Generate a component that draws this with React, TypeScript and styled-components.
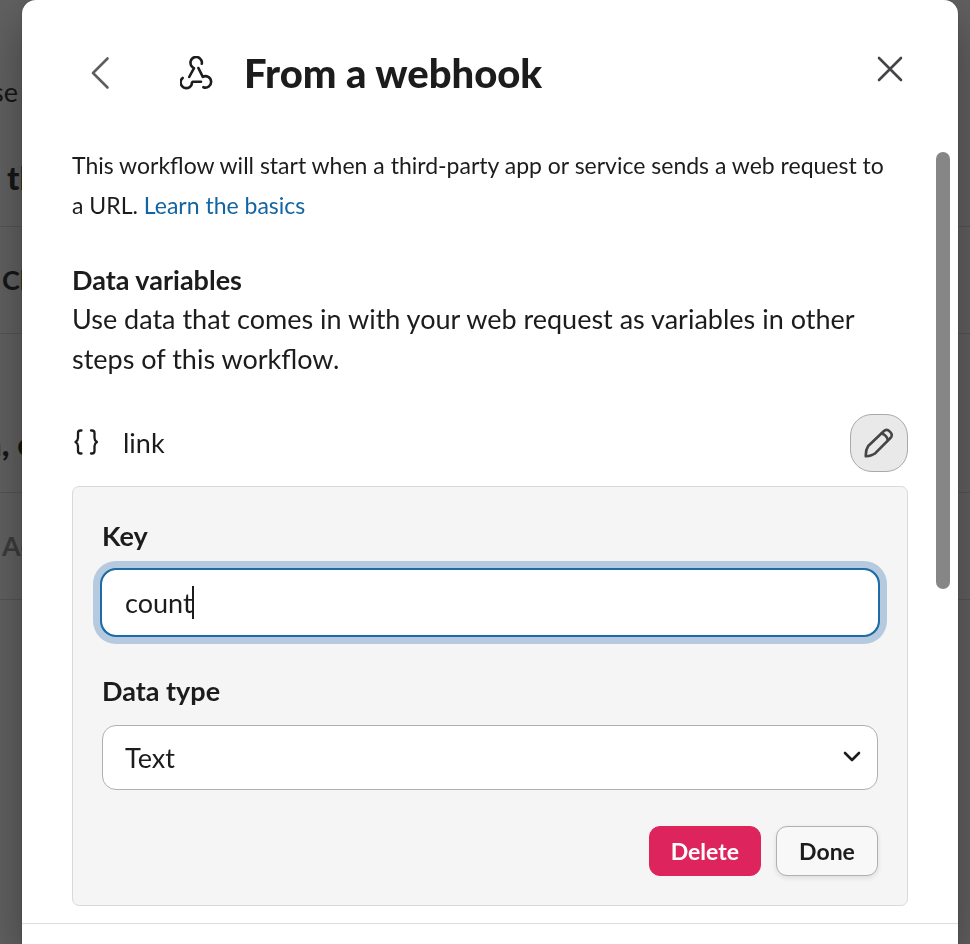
import React, { useState } from "react";
import styled, { createGlobalStyle, css } from "styled-components";

const GlobalStyle = createGlobalStyle`
  *, *::before, *::after { box-sizing: border-box; }
  html, body, #root { height: 100%; }
  body {
    margin: 0;
    overflow: hidden;
    background: #616161;
    color: #1d1c1d;
    font-family: Lato, "Open Sans", sans-serif;
    font-size: 27px;
    line-height: 40px;
  }
  button, input, select { font: inherit; color: inherit; margin: 0; }
`;

const Workspace = styled.div`
  min-height: 100%;
  color: #161616;
`;

const StepRow = styled.div<{ $height: number }>`
  display: flex;
  flex-direction: column;
  justify-content: center;
  height: ${(p) => p.$height}px;
  border-bottom: 1px solid #555555;
`;

const StepText = styled.span<{
  $indent?: number;
  $fromEnd?: number;
  $weight?: number;
  $size?: number;
  $muted?: boolean;
}>`
  display: flex;
  white-space: nowrap;
  font-weight: ${(p) => p.$weight ?? 400};
  font-size: ${(p) => p.$size ?? 27}px;
  ${(p) =>
    p.$fromEnd !== undefined
      ? css`
          width: ${p.$fromEnd}px;
          justify-content: flex-end;
        `
      : css`
          padding-left: ${p.$indent ?? 0}px;
        `}
  ${(p) => p.$muted && "color: #3c3c3c;"}
`;

const IntroRow = styled(StepRow)`
  justify-content: flex-end;
  gap: 45px;
  padding-bottom: 29px;
`;

const Overlay = styled.div`
  position: fixed;
  inset: 0;
  display: flex;
  padding: 0 12px 0 22px;
`;

const Dialog = styled.section`
  flex: 1;
  min-width: 0;
  display: flex;
  flex-direction: column;
  background: #ffffff;
  border-radius: 14px 14px 0 0;
  box-shadow: 0 0 0 1px rgba(29, 28, 29, 0.13), 0 18px 48px rgba(0, 0, 0, 0.35);
`;

const Header = styled.header`
  display: flex;
  align-items: center;
  flex-shrink: 0;
  height: 145px;
  padding: 0 50px;
`;

const IconButton = styled.button`
  display: flex;
  align-items: center;
  justify-content: center;
  width: 56px;
  height: 56px;
  padding: 0;
  border: 0;
  background: none;
  color: #5e5d60;
`;

const CloseButton = styled(IconButton)`
  width: 36px;
  margin: 0 0 8px auto;
  color: #454447;
`;

const TitleIcon = styled.span`
  display: flex;
  margin: 0 30px 0 52px;
`;

const Title = styled.h1`
  margin: 0;
  font-size: 40px;
  font-weight: 900;
  line-height: 48px;
`;

const Body = styled.div`
  flex: 1;
  min-height: 0;
  display: flex;
  padding-right: 8px;
`;

const Content = styled.div`
  flex: 1;
  min-width: 0;
  overflow: hidden;
  padding: 0 28px 17px 50px;
`;

const ScrollTrack = styled.div`
  display: grid;
  grid-template-rows: 17fr 13fr;
  width: 14px;
  padding-top: 7px;
`;

const ScrollThumb = styled.div`
  border-radius: 7px;
  background: #868686;
`;

const Intro = styled.p`
  margin: 0 0 35px;
  font-size: 23px;
`;

const Link = styled.a`
  color: #1264a3;
  text-decoration: none;
`;

const SectionTitle = styled.h2`
  margin: 0;
  font-size: inherit;
  font-weight: 700;
  line-height: 39px;
`;

const Description = styled.p`
  margin: 0 0 35px;
`;

const VariableRow = styled.div`
  display: flex;
  align-items: center;
  height: 58px;
  margin-bottom: 14px;
`;

const VariableName = styled.span`
  flex: 1;
  margin-left: 23px;
`;

const EditButton = styled(IconButton)`
  width: 58px;
  height: 58px;
  border: 1px solid #a9a9a9;
  border-radius: 22px;
  background: #e9e9e9;
  color: #454447;
`;

const Panel = styled.form`
  display: flex;
  flex-direction: column;
  gap: 36px;
  padding: 29px;
  border: 1px solid #d9d9d9;
  border-radius: 7px;
  background: #f5f5f5;
`;

const Field = styled.div`
  display: flex;
  flex-direction: column;
  gap: 14px;
`;

const Label = styled.label`
  font-weight: 700;
`;

const Control = styled.div`
  position: relative;
  display: flex;
`;

const controlBox = css`
  width: 100%;
  height: 65px;
  padding: 0 22px;
  border-radius: 14px;
  background: #ffffff;
  outline: none;
`;

const TextInput = styled.input`
  ${controlBox}
  border: 1px solid #ffffff;
  box-shadow: 0 0 0 2px #1d6ba7, 0 0 0 9px #b5cade;
  caret-color: transparent;
`;

const Caret = styled.span`
  position: absolute;
  left: 90px;
  top: 16px;
  width: 2px;
  height: 33px;
  background: #1d1c1d;
`;

const Select = styled.select`
  ${controlBox}
  appearance: none;
  border: 1px solid #b0b0b0;
`;

const SelectArrow = styled.svg`
  position: absolute;
  right: 16px;
  top: 26px;
  pointer-events: none;
`;

const Actions = styled.div`
  display: flex;
  justify-content: flex-end;
  gap: 15px;
`;

const Button = styled.button<{ $danger?: boolean }>`
  min-width: 102px;
  height: 50px;
  padding: 0 21px;
  border: 1px solid ${(p) => (p.$danger ? "#de245c" : "#b0b0b0")};
  border-radius: 11px;
  background: ${(p) => (p.$danger ? "#de245c" : "#f8f8f8")};
  color: ${(p) => (p.$danger ? "#ffffff" : "#1d1c1d")};
  font-size: 23px;
  font-weight: 700;
  line-height: 40px;
  ${(p) => !p.$danger && "box-shadow: 0 2px 5px rgba(0, 0, 0, 0.1);"}
`;

const Footer = styled.footer`
  flex-shrink: 0;
  height: 21px;
  border-top: 1px solid #dddddd;
`;

const stroke = {
  fill: "none",
  stroke: "currentColor",
  strokeLinecap: "round",
  strokeLinejoin: "round",
} as const;

const BackIcon = () => (
  <svg width="20" height="34" viewBox="0 0 20 34" {...stroke} strokeWidth="2.6" aria-hidden="true">
    <path d="M17.500 2.500 3 17l14.500 14.500" />
  </svg>
);

const CloseIcon = () => (
  <svg width="26" height="26" viewBox="0 0 26 26" {...stroke} strokeWidth="2.6" aria-hidden="true">
    <path d="M2 2l22 22M24 2 2 24" />
  </svg>
);

const WebhookIcon = () => (
  <svg width="34" height="34" viewBox="0 0 34 34" {...stroke} strokeWidth="2.6" aria-hidden="true">
    <path d="M21.800 7.800A5.700 5.700 0 1 0 12.400 11L14 12.200 9.200 21" />
    <path d="M18.400 12l4.400 8.800A5.700 5.700 0 1 1 23.400 31.200" />
    <path d="M2.700 22A5.700 5.700 0 1 0 12 26.500L12.800 25.800H21" />
  </svg>
);

const BracesIcon = () => (
  <svg width="28" height="28" viewBox="0 0 28 28" {...stroke} strokeWidth="2.3" aria-hidden="true">
    <path d="M9.500 1.500H8.500C6.600 1.500 6 2.600 6 4v5c0 2-1.200 3.200-2.500 4C4.800 13.800 6 15 6 17v5c0 1.400.6 2.500 2.500 2.500h1" />
    <path d="M19 1.500h1c1.900 0 2.500 1.100 2.500 2.500v5c0 2 1.200 3.200 2.500 4-1.300.8-2.500 2-2.500 4v5c0 1.400-.6 2.500-2.500 2.500h-1" />
  </svg>
);

const PencilIcon = () => (
  <svg width="30" height="30" viewBox="0 0 30 30" {...stroke} strokeWidth="2.6" aria-hidden="true">
    <path d="M1.800 28.300C1.600 24.500 2.200 21 4.200 18L19.700 3.200c2.200-2.100 4.200-1.600 6.200.4 2.300 2.200 2.500 4.400.5 6.400L11.600 24.900c-2.800 2.300-6.300 3.100-9.800 3.400z" />
    <path d="M17.500 5.600c3.500 1 5.500 3.200 6.400 6.500" />
  </svg>
);

export default function App() {
  const [key, setKey] = useState("count");
  const [type, setType] = useState("Text");

  return (
    <>
      <GlobalStyle />
      <Workspace aria-hidden="true">
        <IntroRow $height={227}>
          <StepText $fromEnd={18}>se</StepText>
          <StepText $indent={7} $weight={900} $size={33}>th</StepText>
        </IntroRow>
        <StepRow $height={107}>
          <StepText $indent={2} $weight={700}>Cl</StepText>
        </StepRow>
        <IntroRow $height={159}>
          <StepText $fromEnd={35} $weight={900} $size={33}>n, e</StepText>
        </IntroRow>
        <StepRow $height={107}>
          <StepText $indent={2} $weight={700} $muted>Ac</StepText>
        </StepRow>
      </Workspace>

      <Overlay>
        <Dialog role="dialog" aria-labelledby="dialog-title">
          <Header>
            <IconButton type="button" aria-label="Back">
              <BackIcon />
            </IconButton>
            <TitleIcon>
              <WebhookIcon />
            </TitleIcon>
            <Title id="dialog-title">From a webhook</Title>
            <CloseButton type="button" aria-label="Close">
              <CloseIcon />
            </CloseButton>
          </Header>

          <Body>
            <Content>
              <Intro>
                This workflow will start when a third-party app or service sends a web request to
                a&nbsp;URL. <Link href="#basics">Learn the basics</Link>
              </Intro>
              <SectionTitle>Data variables</SectionTitle>
              <Description>
                Use data that comes in with your web request as variables in other steps of this
                workflow.
              </Description>

              <VariableRow>
                <BracesIcon />
                <VariableName>link</VariableName>
                <EditButton type="button" aria-label="Edit link">
                  <PencilIcon />
                </EditButton>
              </VariableRow>

              <Panel onSubmit={(e) => e.preventDefault()}>
                <Field>
                  <Label htmlFor="key">Key</Label>
                  <Control>
                    <TextInput id="key" value={key} onChange={(e) => setKey(e.target.value)} />
                    {key === "count" && <Caret />}
                  </Control>
                </Field>
                <Field>
                  <Label htmlFor="type">Data type</Label>
                  <Control>
                    <Select id="type" value={type} onChange={(e) => setType(e.target.value)}>
                      <option>Text</option>
                    </Select>
                    <SelectArrow width="20" height="12" viewBox="0 0 20 12" {...stroke} strokeWidth="2.6" aria-hidden="true">
                      <path d="M3 2l7 7 7-7" />
                    </SelectArrow>
                  </Control>
                </Field>
                <Actions>
                  <Button type="button" $danger>Delete</Button>
                  <Button type="submit">Done</Button>
                </Actions>
              </Panel>
            </Content>
            <ScrollTrack>
              <ScrollThumb />
            </ScrollTrack>
          </Body>
          <Footer />
        </Dialog>
      </Overlay>
    </>
  );
}
